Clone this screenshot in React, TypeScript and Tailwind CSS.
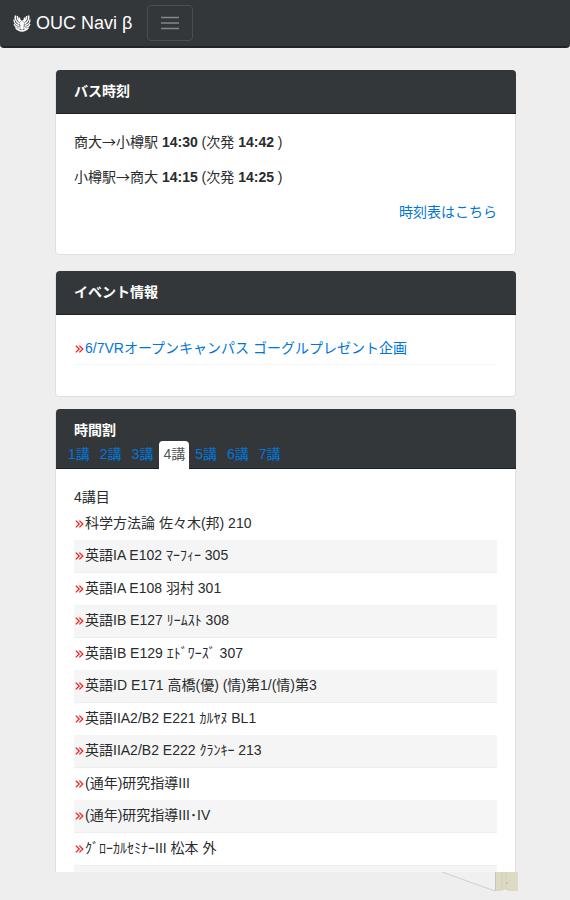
import { useState } from "react"
import clsx from "clsx"

const BUS_TIMES = [
  { from: "商大", to: "小樽駅", next: "14:30", after: "14:42" },
  { from: "小樽駅", to: "商大", next: "14:15", after: "14:25" },
]

const EVENTS = ["6/7VRオープンキャンパス ゴーグルプレゼント企画"]

const PERIODS = [1, 2, 3, 4, 5, 6, 7]

const CLASSES = [
  "科学方法論 佐々木(邦) 210",
  "英語IA E102 ﾏｰﾌｨｰ 305",
  "英語IA E108 羽村 301",
  "英語IB E127 ﾘｰﾑｽﾄ 308",
  "英語IB E129 ｴﾄﾞﾜｰｽﾞ 307",
  "英語ID E171 高橋(優) (情)第1/(情)第3",
  "英語IIA2/B2 E221 ｶﾙﾔﾇ BL1",
  "英語IIA2/B2 E222 ｸﾗﾝｷｰ 213",
  "(通年)研究指導III",
  "(通年)研究指導III･IV",
  "ｸﾞﾛｰｶﾙｾﾐﾅｰIII 松本 外",
]

function Emblem() {
  return (
    <svg viewBox="0 0 36 36" className="size-[18px] shrink-0" fill="none" stroke="#fff" aria-hidden="true">
      <path d="M5 3 C3 10 5 15 13 20 M9 4 C8 9 10 13 15 17 M13 7 C12 10 13 12 16 14" strokeWidth="3" />
      <path d="M31 3 C33 10 31 15 23 20 M27 4 C28 9 26 13 21 17 M23 7 C24 10 23 12 20 14" strokeWidth="3" />
      <path d="M2 11 C2 18 6 22 13 23 M34 11 C34 18 30 22 23 23" strokeWidth="2.6" />
      <path d="M2 20 C4 26 9 27 14 26 M34 20 C32 26 27 27 22 26" strokeWidth="2.2" />
      <path d="M5 27 C9 32 13 34 18 34 C23 34 27 32 31 27" strokeWidth="2.6" />
      <path d="M18 12 L22 18 L21 30 L18 32 L15 30 L14 18 Z" fill="#fff" stroke="none" />
      <path d="M9 31 L15 27 M27 31 L21 27" strokeWidth="2.4" />
    </svg>
  )
}

function Marker() {
  return (
    <svg viewBox="0 0 9 9" className="mx-px size-[9px] shrink-0" fill="none" stroke="#ee2222" strokeWidth="1.3" aria-hidden="true">
      <path d="M0.8 1.6 L4.2 5 L0.8 8.4 M4.4 1.6 L7.8 5 L4.4 8.4" />
    </svg>
  )
}

function Card({ title, tabs, children }: { title: string; tabs?: React.ReactNode; children: React.ReactNode }) {
  return (
    <section className="rounded border border-[#e0e0e0] bg-white">
      <header className="-mt-px -mr-px rounded-t border-b border-[#1f2224] bg-[#33373a]">
        <h2 className={clsx("px-[18px] pt-[11px] font-bold text-white", !tabs && "pb-[11px]")}>{title}</h2>
        {tabs}
      </header>
      <div className="px-[18px] pt-[18px] pb-[17px]">{children}</div>
    </section>
  )
}

export default function App() {
  const [period, setPeriod] = useState(4)

  return (
    <div className="flex h-screen flex-col bg-[#eee] font-['Liberation_Sans','Noto_Sans_CJK_JP',sans-serif] text-[14px] leading-[21px] text-[#292b2c]">
      <nav className="flex shrink-0 items-center gap-[15px] rounded-b-sm border-b-2 border-[#222527] bg-[#33373a] px-[13px] py-[5px]">
        <a href="#" className="flex items-center gap-[5px] text-lg text-white">
          <Emblem />
          OUC Navi β
        </a>
        <button
          type="button"
          aria-label="メニュー"
          className="flex h-9 w-[46px] items-center justify-center rounded border border-[#4a4e50]"
        >
          <svg viewBox="0 0 18 14" className="h-[14px] w-[18px]" stroke="#85888a" strokeWidth="1.5" aria-hidden="true">
            <path d="M0 1.5H18M0 7H18M0 12.5H18" />
          </svg>
        </button>
      </nav>

      <main className="min-h-0 flex-1 overflow-hidden pt-[22px] pr-[54px] pl-[55px]">
        <div className="mb-4">
          <Card title="バス時刻">
            {BUS_TIMES.map((bus) => (
              <p key={bus.from} className="mb-[14px]">
                {bus.from}
                <span className="font-['Noto_Sans_CJK_JP',sans-serif] leading-none">→</span>
                {bus.to} <b>{bus.next}</b> (次発 <b>{bus.after}</b> )
              </p>
            ))}
            <p className="mb-[14px] text-right">
              <a href="#" className="text-[#0275d8]">時刻表はこちら</a>
            </p>
          </Card>
        </div>

        <div className="mb-3">
          <Card title="イベント情報">
            <ul className="mb-[14px]">
              {EVENTS.map((name) => (
                <li key={name} className="flex items-center border-b border-[#f5f5f5] py-[5px]">
                  <Marker />
                  <a href="#" className="text-[#0275d8]">{name}</a>
                </li>
              ))}
            </ul>
          </Card>
        </div>

        <Card
          title="時間割"
          tabs={
            <div role="tablist" className="-mb-px flex gap-0.5 px-2">
              {PERIODS.map((n) => (
                <button
                  key={n}
                  type="button"
                  role="tab"
                  aria-selected={n === period}
                  onClick={() => setPeriod(n)}
                  className={clsx(
                    "rounded-t px-1 pt-[3px] pb-1",
                    n === period ? "bg-white text-[#55595c]" : "text-[#0275d8]"
                  )}
                >
                  {n}講
                </button>
              ))}
            </div>
          }
        >
          <p>{period}講目</p>
          <ul>
            {CLASSES.map((name) => (
              <li
                key={name}
                className="flex items-center pt-[5px] pb-1.5 even:border-b even:border-[#eee] even:bg-[#f5f5f5]"
              >
                <Marker />
                {name}
              </li>
            ))}
            <li className="h-8 border-t border-[#eee] bg-[#f5f5f5]" />
          </ul>
        </Card>
      </main>

      <footer className="flex h-7 shrink-0 justify-end pr-[51px]">
        <svg viewBox="0 0 78 20" className="h-5 w-[78px]" aria-hidden="true">
          <path d="M1 0H54V19Z" fill="#f0f0f0" />
          <path d="M1 0L54 19" stroke="#cfcfcf" />
          <path d="M54.5 0V19" stroke="#c4c4c8" />
          <path d="M55 0H77V19H67Q64 16 61 19H55Z" fill="#dcdac3" />
          <path d="M61 0V17M65 0V17" stroke="#d2d0b4" />
          <circle cx="66" cy="11" r="1" fill="#c4c29f" />
        </svg>
      </footer>
    </div>
  )
}
